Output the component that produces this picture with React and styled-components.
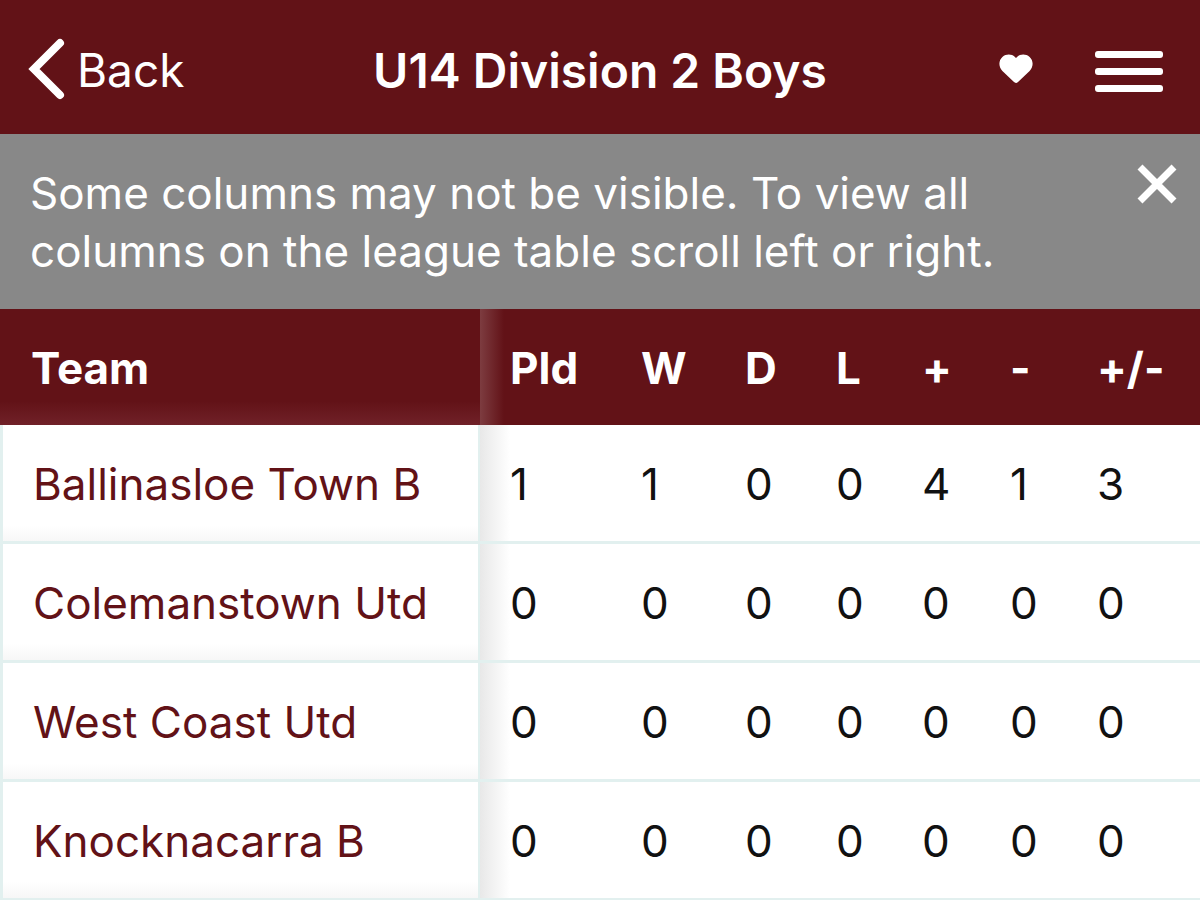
import React, { useState } from "react";
import styled, { createGlobalStyle } from "styled-components";

const columns = [
  { label: "Pld", width: 131 },
  { label: "W", width: 104 },
  { label: "D", width: 91 },
  { label: "L", width: 86 },
  { label: "+", width: 88 },
  { label: "-", width: 87 },
  { label: "+/-", width: 133 },
];

const teams = [
  { name: "Ballinasloe Town B", stats: [1, 1, 0, 0, 4, 1, 3] },
  { name: "Colemanstown Utd", stats: [0, 0, 0, 0, 0, 0, 0] },
  { name: "West Coast Utd", stats: [0, 0, 0, 0, 0, 0, 0] },
  { name: "Knocknacarra B", stats: [0, 0, 0, 0, 0, 0, 0] },
];

function App() {
  const [showNotice, setShowNotice] = useState(true);

  return (
    <>
      <GlobalStyle />
      <Header>
        <BackButton type="button">
          <svg width="37" height="64" viewBox="0 0 37 64" fill="none" stroke="#fff" strokeWidth="8" strokeLinecap="round" strokeLinejoin="miter" aria-hidden="true">
            <path d="M32 5L6 31L32 57" />
          </svg>
          Back
        </BackButton>
        <Title>U14 Division 2 Boys</Title>
        <Actions>
          <IconButton type="button" aria-label="Favourite">
            <svg width="34" height="34" viewBox="0 0 34 34" fill="#fff" aria-hidden="true">
              <path d="M17 29C16.1 29 15.4 28.5 14.7 27.8L3.4 16.9C-0.8 12.7 -0.4 6.3 3.4 2.9C7.3 -0.6 12.9 -0.1 15.7 2.8L17 4.1L18.3 2.8C21.1 -0.1 26.7 -0.6 30.6 2.9C34.4 6.3 34.8 12.7 30.6 16.9L19.3 27.8C18.6 28.5 17.9 29 17 29Z" />
            </svg>
          </IconButton>
          <IconButton type="button" aria-label="Menu">
            <svg width="68" height="42" viewBox="0 0 68 42" fill="#fff" aria-hidden="true">
              <rect y="1" width="68" height="7" rx="3" />
              <rect y="18" width="68" height="7" rx="3" />
              <rect y="35" width="68" height="7" rx="3" />
            </svg>
          </IconButton>
        </Actions>
      </Header>

      {showNotice && (
        <Notice>
          <NoticeText>
            Some columns may not be visible. To view all columns on the league
            table scroll left or right.
          </NoticeText>
          <IconButton type="button" aria-label="Close" onClick={() => setShowNotice(false)}>
            <svg width="40" height="40" viewBox="0 0 40 40" fill="none" stroke="#fff" strokeWidth="7" aria-hidden="true">
              <path d="M3 3L37 37M37 3L3 37" />
            </svg>
          </IconButton>
        </Notice>
      )}

      <TableScroll>
        <Table>
          <colgroup>
            <col />
            {columns.map((col) => (
              <StatCol key={col.label} $width={col.width} />
            ))}
          </colgroup>
          <thead>
            <tr>
              <TeamHead scope="col">Team</TeamHead>
              {columns.map((col, i) => (
                <StatHead key={col.label} scope="col" $first={i === 0}>{col.label}</StatHead>
              ))}
            </tr>
          </thead>
          <tbody>
            {teams.map((team) => (
              <tr key={team.name}>
                <TeamCell scope="row">{team.name}</TeamCell>
                {team.stats.map((value, i) => (
                  <StatCell key={columns[i].label} $first={i === 0}>{value}</StatCell>
                ))}
              </tr>
            ))}
          </tbody>
        </Table>
      </TableScroll>
    </>
  );
}

const GlobalStyle = createGlobalStyle`
  * {
    box-sizing: border-box;
  }

  body {
    margin: 0;
    background-color: #fff;
    color: #111;
    font-family: Inter, Roboto, "Liberation Sans", sans-serif;
    font-size: 44px;
  }
`;

const Header = styled.header`
  display: grid;
  grid-template-columns: 1fr auto 1fr;
  align-items: center;
  height: 134px;
  padding: 8px 28px 0;
  background-color: #621217;
  color: #fff;
`;

const BackButton = styled.button`
  display: flex;
  align-items: center;
  justify-self: start;
  gap: 12px;
  padding: 0 0 2px;
  border: none;
  background: none;
  color: #fff;
  font: inherit;
  font-size: 46px;
  cursor: pointer;
`;

const Title = styled.h1`
  margin: 0;
  padding-bottom: 2px;
  font-size: 48px;
  font-weight: 600;
`;

const Actions = styled.div`
  display: flex;
  align-items: center;
  justify-self: end;
  gap: 62px;
  padding-right: 9px;
`;

const IconButton = styled.button`
  display: flex;
  flex-shrink: 0;
  padding: 0;
  border: none;
  background: none;
  cursor: pointer;
`;

const Notice = styled.div`
  display: flex;
  align-items: flex-start;
  justify-content: space-between;
  padding: 30px 23px 29px 30px;
  background-color: #888;
  color: #fff;
`;

const NoticeText = styled.p`
  max-width: 1020px;
  margin: 0;
  line-height: 58px;
`;

const TableScroll = styled.div`
  overflow-x: auto;
`;

const Table = styled.table`
  width: 100%;
  min-width: 1200px;
  table-layout: fixed;
  border-collapse: separate;
  border-spacing: 0;
`;

const StatCol = styled.col`
  width: ${(props) => props.$width}px;
`;

const HeadCell = styled.th`
  height: 116px;
  padding: 2px 0 0 30px;
  background-color: #621217;
  color: #fff;
  font-weight: 700;
  text-align: left;
`;

const TeamHead = styled(HeadCell)`
  padding-left: 31px;
  background-image: linear-gradient(to top, #702128, #621217 24px);
`;

const StatHead = styled(HeadCell)`
  ${(props) => props.$first && "background-image: linear-gradient(to right, #7d3c40, #621217 24px);"}
`;

const TeamCell = styled.th`
  height: 119px;
  padding: 2px 0 0 30px;
  border: solid #e2f0ef;
  border-width: 0 2px 3px 3px;
  background-image: linear-gradient(to top, #f7f7f7, #fff 16px);
  color: #621217;
  font-weight: 400;
  text-align: left;
  white-space: nowrap;
`;

const StatCell = styled.td`
  height: 119px;
  padding: 2px 0 0 30px;
  border-bottom: 3px solid #e2f0ef;
  ${(props) => props.$first && "background-image: linear-gradient(to right, #e8e8e8, #fff 30px);"}
`;

export default App;
